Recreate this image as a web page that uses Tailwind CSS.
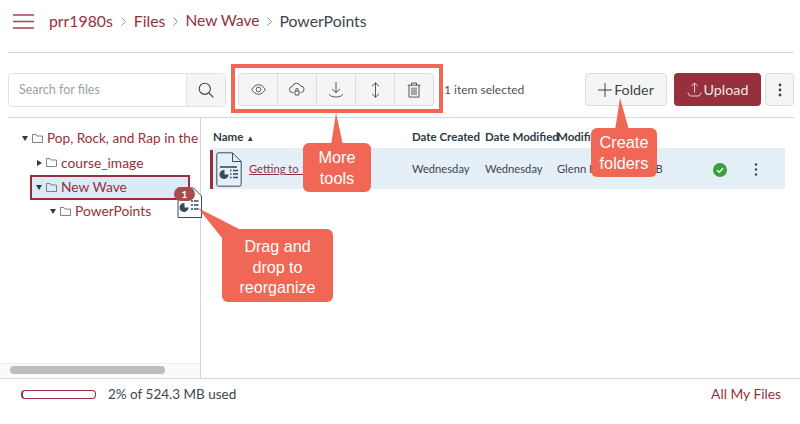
<!DOCTYPE html>
<html lang="en">
<head>
  <meta charset="UTF-8" />
  <title>Files - PowerPoints</title>
  <script src="https://cdn.jsdelivr.net/npm/@tailwindcss/browser@4"></script>
</head>
<body class="relative w-[800px] h-[424px] overflow-hidden bg-white font-['Lato','Liberation_Sans',sans-serif] text-[#3d464d]">

  <!-- breadcrumb -->
  <header class="ml-2 mr-[6px] h-[53px] border-b border-[#d4d8dc] flex items-center pb-[10px] pl-[5px]">
    <svg class="w-[21px] h-[15px] mr-[15px]" viewBox="0 0 21 15" fill="none" stroke="#a8424d" stroke-width="1.3"><path d="M0 1h21M0 7.5h21M0 14h21"/></svg>
    <nav class="flex items-center text-[15.8px] text-[#96303c]">
      <span>prr1980s</span>
      <svg class="w-[5px] h-[9px] mx-[8px]" viewBox="0 0 5 9" fill="none" stroke="#8b969e"><path d="M.5.5l4 4-4 4"/></svg>
      <span>Files</span>
      <svg class="w-[5px] h-[9px] mx-[7.5px]" viewBox="0 0 5 9" fill="none" stroke="#8b969e"><path d="M.5.5l4 4-4 4"/></svg>
      <span class="text-[15.5px]">New Wave</span>
      <svg class="w-[5px] h-[9px] mx-[7.5px]" viewBox="0 0 5 9" fill="none" stroke="#8b969e"><path d="M.5.5l4 4-4 4"/></svg>
      <span class="text-[#3d464d]">PowerPoints</span>
    </nav>
  </header>

  <!-- toolbar -->
  <div class="ml-2 mr-[6px] h-[65px] border-b border-[#d4d8dc] flex items-start pt-[20px]">
    <div class="flex w-[218px] h-[34px] border border-[#dfe3e6] rounded">
      <span class="flex-1 pl-[10px] text-[12.5px] leading-[32px] text-[#9aa2a8]">Search for files</span>
      <span class="w-[39px] flex items-center justify-center bg-[#f5f5f5] border-l border-[#dfe3e6] rounded-r">
        <svg class="w-[16px] h-[16px]" viewBox="0 0 16 16" fill="none" stroke="#3d464d" stroke-width="1.1"><circle cx="6.8" cy="6.8" r="5.6"/><path d="M11 11l4.3 4.3"/></svg>
      </span>
    </div>
    <div class="ml-[12px] flex w-[196px] h-[33px] bg-[#f5f5f5] border border-[#d9dde0] rounded divide-x divide-[#d9dde0]">
      <span class="flex-1 flex items-center justify-center">
        <svg class="w-[15px] h-[11px]" viewBox="0 0 15 11" fill="none" stroke="#3d464d" stroke-width=".9"><path d="M.7 5.5C3 2 5 .8 7.5.8S12 2 14.3 5.5C12 9 10 10.2 7.5 10.2S3 9 .7 5.5z"/><circle cx="7.5" cy="5.5" r="2.3"/></svg>
      </span>
      <span class="flex-1 flex items-center justify-center">
        <svg class="w-[16px] h-[13px]" viewBox="0 0 16 13" fill="none" stroke="#3d464d" stroke-width=".9"><path d="M4.5 9.5H3.6a3 3 0 0 1-.3-6A4.4 4.4 0 0 1 11.6 3a3.3 3.3 0 0 1 .9 6.5h-1"/><rect x="6" y="8" width="4" height="4" rx=".5"/><path d="M6.8 8V6.6a1.2 1.2 0 0 1 2.4 0V8"/></svg>
      </span>
      <span class="flex-1 flex items-center justify-center">
        <svg class="w-[16px] h-[17px]" viewBox="0 0 16 17" fill="none" stroke="#3d464d" stroke-width=".9"><path d="M8 1v10.5M4 7.8l4 3.9 4-3.9M1 13.2c1.5 1.9 3.8 2.8 7 2.8s5.500-.9 7-2.800"/></svg>
      </span>
      <span class="flex-1 flex items-center justify-center">
        <svg class="w-[9px] h-[16px]" viewBox="0 0 9 16" fill="none" stroke="#3d464d" stroke-width=".9"><path d="M4.500.8v14.400M1 4.200L4.500.8 8 4.200M1 11.800l3.500 3.400 3.500-3.400"/></svg>
      </span>
      <span class="flex-1 flex items-center justify-center">
        <svg class="w-[14px] h-[16px]" viewBox="0 0 14 16" fill="none" stroke="#3d464d" stroke-width=".9"><path d="M.6 3.200h12.800M4.500 3V1h5v2M2 3.200v11.900h10V3.200M5 5.500v7.500M7 5.500v7.500M9 5.500v7.500"/></svg>
      </span>
    </div>
    <span class="ml-[10px] text-[12px] leading-[34px] text-[#4a5359]">1 item selected</span>
    <div class="ml-auto flex gap-[4px]">
      <span class="mr-[3px] w-[82px] h-[33px] flex items-center justify-center gap-[2px] bg-[#f5f5f5] border border-[#d9dde0] rounded text-[14.3px]">
        <svg class="w-[14px] h-[14px]" viewBox="0 0 14 14" stroke="#3d464d" stroke-width="1"><path d="M7 0v14M0 7h14"/></svg>Folder
      </span>
      <span class="w-[87px] h-[33px] flex items-center justify-center gap-[2px] bg-[#96303c] rounded text-[14.3px] text-[#f0e4e5]">
        <svg class="w-[15px] h-[15px]" viewBox="0 0 15 15" fill="none" stroke="#f0e4e5" stroke-width=".9"><path d="M7.500 1v9.500M4.500 4l3-3 3 3M1 10.500c.3 2.200 1.500 3.500 3 3.500h7c1.500 0 2.700-1.300 3-3.500"/></svg>Upload
      </span>
      <span class="w-[29px] h-[33px] flex items-center justify-center bg-[#f5f5f5] border border-[#d9dde0] rounded">
        <svg class="w-[4px] h-[14px]" viewBox="0 0 4 14" fill="#3d464d"><circle cx="2" cy="2" r="1.400"/><circle cx="2" cy="7" r="1.400"/><circle cx="2" cy="12" r="1.400"/></svg>
      </span>
    </div>
  </div>

  <!-- main area -->
  <div class="flex h-[260px]">
    <aside class="w-[201px] border-r border-[#d4d8dc] flex flex-col overflow-hidden">
      <ul class="flex-1 pt-[8px] text-[13.8px] leading-[24.500px] text-[#96303c] whitespace-nowrap">
        <li class="flex items-center pl-[22px] text-[13.6px]">
          <svg class="w-[6px] h-[5px] mr-[4px]" viewBox="0 0 6 5" fill="#2d3b45"><path d="M0 0h6L3 5z"/></svg>
          <svg class="w-[11px] h-[9px] mr-[4px]" viewBox="0 0 11 9" fill="none" stroke="#5c666d" stroke-width=".8"><path d="M.5 8.500V.5h3.500l1 1.500h5.500v6.500z"/></svg>Pop, Rock, and Rap in the
        </li>
        <li class="flex items-center pl-[37px]">
          <svg class="w-[5px] h-[6px] mr-[4px]" viewBox="0 0 5 6" fill="#2d3b45"><path d="M0 0l5 3-5 3z"/></svg>
          <svg class="w-[11px] h-[9px] mr-[4px]" viewBox="0 0 11 9" fill="none" stroke="#5c666d" stroke-width=".8"><path d="M.5 8.500V.5h3.500l1 1.500h5.500v6.500z"/></svg>course_image
        </li>
        <li class="ml-[30px] mr-[10px] h-[25px] flex items-center pl-[4px] bg-[#dceaf5] border-2 border-[#96303c]">
          <svg class="w-[6px] h-[5px] mr-[4px]" viewBox="0 0 6 5" fill="#2d3b45"><path d="M0 0h6L3 5z"/></svg>
          <svg class="w-[11px] h-[9px] mr-[4px]" viewBox="0 0 11 9" fill="none" stroke="#5c666d" stroke-width=".8"><path d="M.5 8.500V.5h3.500l1 1.500h5.500v6.500z"/></svg>New Wave
        </li>
        <li class="flex items-center pl-[50px] -mt-px">
          <svg class="w-[6px] h-[5px] mr-[4px]" viewBox="0 0 6 5" fill="#2d3b45"><path d="M0 0h6L3 5z"/></svg>
          <svg class="w-[11px] h-[9px] mr-[4px]" viewBox="0 0 11 9" fill="none" stroke="#5c666d" stroke-width=".8"><path d="M.5 8.500V.5h3.500l1 1.500h5.500v6.500z"/></svg>PowerPoints
        </li>
      </ul>
      <div class="h-[15px] bg-[#fafafa] border-t border-[#eeeeee] pl-[10px] pt-[2px]">
        <div class="w-[155px] h-[8px] rounded bg-[#bdbdbd]"></div>
      </div>
    </aside>

    <section class="flex-1 pl-[9px] pr-[15px] pt-[12px]">
      <div class="h-[20px] flex items-center pb-1 text-[11.500px] font-bold text-[#2d3b45] whitespace-nowrap border-b-2 border-[#e8edf1]">
        <span class="w-[202px] pl-[3px]">Name <span class="text-[8px] align-middle">▲</span></span>
        <span class="w-[73px]">Date Created</span>
        <span class="w-[72px]">Date Modified</span>
        <span>Modifi</span>
      </div>
      <div class="h-[39px] flex items-center bg-[#e5eff7] border-l-[3px] border-[#96303c] text-[11.2px] whitespace-nowrap">
        <svg class="w-[26px] h-[35px] ml-[3px] mr-[7px]" viewBox="0 0 26 35" fill="none" stroke="#3a4a56"><path d="M2.500.8h14l8.700 8.700v23a1.700 1.700 0 0 1-1.700 1.700h-21a1.700 1.700 0 0 1-1.700-1.700V2.500A1.700 1.700 0 0 1 2.500.8zM16.500 1v8.500h8.500"/><path d="M4 15h17" stroke-width="1.600"/><path d="M8.500 18a4.500 4.500 0 1 0 4 4.500h-4z" fill="#3a4a56" stroke="none"/><path d="M14 18.500h1.500M17 18.500h5M14 22h1.500M17 22h5M14 25.500h1.500M17 25.500h5" stroke-width="1.500"/></svg>
        <span class="w-[163px] underline text-[#96303c]">Getting to 1</span>
        <span class="w-[73px]">Wednesday</span>
        <span class="w-[72px]">Wednesday</span>
        <span class="w-[88px]">Glenn P</span>
        <span class="w-[68px]">MB</span>
        <svg class="w-[14px] h-[14px] mr-[27px]" viewBox="0 0 14 14"><circle cx="7" cy="7" r="7" fill="#3ba03b"/><path d="M4 7.200l2.200 2.100L10 5.300" fill="none" stroke="#fff" stroke-width="1.500"/></svg>
        <svg class="w-[4px] h-[13px]" viewBox="0 0 4 13" fill="#3d464d"><circle cx="2" cy="1.500" r="1.200"/><circle cx="2" cy="6.500" r="1.200"/><circle cx="2" cy="11.500" r="1.200"/></svg>
      </div>
    </section>
  </div>

  <!-- footer -->
  <footer class="h-[46px] border-t border-[#d4d8dc] flex items-center pl-[21px] pr-[19px] pb-[15px] text-[13.500px]">
    <div class="w-[75px] h-[9px] border border-[#96303c] border-l-2 rounded mr-[12px]"></div>
    <span>2% of 524.3 MB used</span>
    <span class="ml-auto text-[13.8px] text-[#96303c]">All My Files</span>
  </footer>

  <!-- tools highlight box -->
  <div class="absolute left-[231px] top-[64px] w-[212px] h-[49px] border-[4px] border-[#f06756]"></div>

  <!-- drag ghost -->
  <svg class="absolute left-[177px] top-[187px] w-[25px] h-[31px]" viewBox="0 0 25 31" fill="#fff" stroke="#3a4a56"><path d="M1 1h15.500L24.500 9v21.500H1z"/><path d="M7.500 16a4.500 4.500 0 1 0 4 4.500h-4z" fill="#3a4a56" stroke="none"/><path d="M14 14h2M17 14h4.500M14 18h2M17 18h4.500M14 22h2M17 22h4.500" stroke-width="1.500" fill="none"/></svg>
  <span class="absolute left-[174px] top-[187px] w-[21px] h-[14px] rounded-full bg-[#ab4a4d] text-white text-[10px] font-bold text-center leading-[14px]">1</span>

  <!-- callouts -->
  <svg class="absolute left-0 top-0 w-[800px] h-[424px]" viewBox="0 0 800 424" fill="#f06756">
    <path d="M336 113l-5 32h12z"/>
    <path d="M620 98l-5 32h14z"/>
    <path d="M198 208l24 30 21-7z"/>
  </svg>
  <div class="absolute left-[303px] top-[143px] w-[68px] h-[49px] rounded-md bg-[#f06756] text-white text-[16.3px] leading-[20.5px] text-center py-[4px] font-['Liberation_Sans',sans-serif]">More<br />tools</div>
  <div class="absolute left-[591px] top-[128px] w-[66px] h-[49px] rounded-md bg-[#f06756] text-white text-[16.3px] leading-[21px] text-center py-[4px] font-['Liberation_Sans',sans-serif]">Create<br />folders</div>
  <div class="absolute left-[222px] top-[229px] w-[111px] h-[73px] rounded-md bg-[#f06756] text-white text-[16.1px] leading-[20.500px] text-center py-[7px] font-['Liberation_Sans',sans-serif]">Drag and<br />drop to<br />reorganize</div>
</body>
</html>
